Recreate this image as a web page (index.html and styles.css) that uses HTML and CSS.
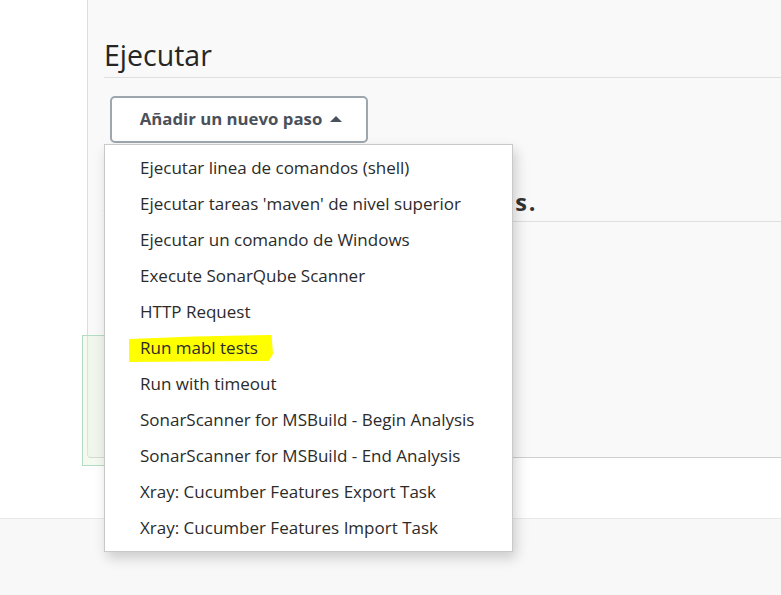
FILE: index.html
```html
<!DOCTYPE html>
<html lang="es">
<head>
<meta charset="utf-8">
<title>Ejecutar</title>
<link rel="stylesheet" href="styles.css">
</head>
<body>
<div class="page">
  <div class="top">
    <aside class="sidebar"></aside>
    <main class="panel">
      <h1 class="section-title">Ejecutar</h1>
      <div class="actions">
        <button class="add-step" type="button">Añadir un nuevo paso <span class="caret"></span></button>
      </div>
      <h2 class="section-title2">Acciones para ejecutar después.</h2>
      <div class="panel-rest"></div>
    </main>
  </div>
  <div class="gap"></div>
  <footer class="footer"></footer>

  <div class="notice"></div>

  <ul class="menu">
    <li class="item">Ejecutar linea de comandos (shell)</li>
    <li class="item">Ejecutar tareas 'maven' de nivel superior</li>
    <li class="item">Ejecutar un comando de Windows</li>
    <li class="item">Execute SonarQube Scanner</li>
    <li class="item">HTTP Request</li>
    <li class="item highlighted"><span class="mark">Run mabl tests</span></li>
    <li class="item">Run with timeout</li>
    <li class="item">SonarScanner for MSBuild - Begin Analysis</li>
    <li class="item">SonarScanner for MSBuild - End Analysis</li>
    <li class="item">Xray: Cucumber Features Export Task</li>
    <li class="item">Xray: Cucumber Features Import Task</li>
  </ul>
</div>
</body>
</html>
```
FILE: styles.css
```css
* { box-sizing: border-box; }
html, body { margin: 0; padding: 0; }
body {
  font-family: "Open Sans", "Noto Sans", sans-serif;
  color: #333;
  background: #fff;
  width: 781px;
  height: 595px;
  overflow: hidden;
}
.page {
  position: relative;
  height: 595px;
  display: flex;
  flex-direction: column;
}
.top {
  display: flex;
  height: 458px;
}
.sidebar {
  width: 87px;
  flex: none;
  background: #fff;
}
.panel {
  flex: 1;
  background: #f9f9f9;
  border-left: 1px solid #dcdcdc;
  border-bottom: 1px solid #cfcfcf;
  border-bottom-left-radius: 4px;
  padding: 0 0 0 16px;
  display: flex;
  flex-direction: column;
}
.section-title {
  margin: 36px 0 0 0;
  font-size: 28.5px;
  font-weight: 400;
  line-height: 38px;
  height: 42px;
  color: #262626;
  border-bottom: 1px solid #dedede;
}
.actions {
  padding: 18px 0 0 6px;
}
.add-step {
  width: 258px;
  height: 47px;
  border: 2px solid #9ea6ae;
  border-radius: 5px;
  background: #fff;
  font-family: "Open Sans", "Noto Sans", sans-serif;
  font-weight: 700;
  font-size: 16.8px;
  color: #4a515a;
  display: flex;
  align-items: center;
  justify-content: center;
  gap: 8px;
  padding: 0 0 2px 4px;
}
.caret {
  width: 0;
  height: 0;
  border-left: 6px solid transparent;
  border-right: 6px solid transparent;
  border-bottom: 6px solid #4a515a;
  margin-top: 1px;
}
.section-title2 {
  margin: 38px 0 0 0;
  padding-top: 5px;
  font-size: 23.5px;
  font-weight: 700;
  letter-spacing: 1.85px;
  line-height: 32px;
  height: 41px;
  color: #333;
  border-bottom: 1px solid #dedede;
  white-space: nowrap;
}
.panel-rest { flex: 1; }
.gap {
  height: 60px;
  background: #fff;
}
.footer {
  flex: 1;
  background: #f8f8f8;
  border-top: 1px solid #e9e9e9;
}
.notice {
  position: absolute;
  left: 82px;
  top: 335px;
  width: 60px;
  height: 131px;
  border: 1px solid #b4dcc4;
  background: rgba(225, 240, 215, 0.35);
}
.menu {
  position: absolute;
  left: 104px;
  top: 144px;
  width: 409px;
  margin: 0;
  padding: 5px 0 5px 0;
  list-style: none;
  background: #fff;
  border: 1px solid #c9c9c9;
  box-shadow: 3px 6px 12px rgba(0, 0, 0, 0.18);
}
.item {
  height: 36px;
  line-height: 36px;
  padding-left: 35px;
  font-size: 17px;
  color: #2b2b2b;
  white-space: nowrap;
}
.highlighted { position: relative; isolation: isolate; }
.mark { position: relative; }
.mark::before {
  content: "";
  position: absolute;
  left: -11px;
  top: -1px;
  width: 144px;
  height: 27px;
  background: #ffff00;
  z-index: -1;
  clip-path: polygon(0 15%, 45% 6%, 99% 0, 100% 70%, 97% 96%, 0 100%);
}
```
